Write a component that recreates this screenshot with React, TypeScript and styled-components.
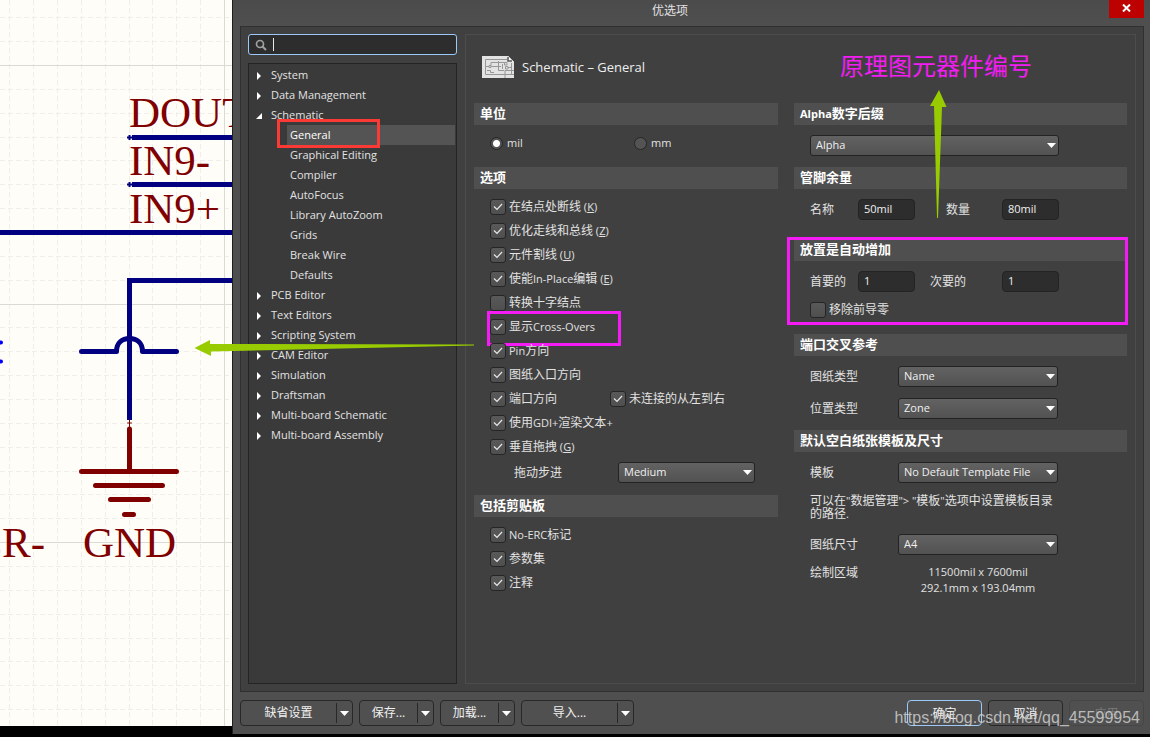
import React from 'react';
import styled, { createGlobalStyle, css } from 'styled-components';

const GlobalStyle = createGlobalStyle`
  * { box-sizing: border-box; }
  body {
    margin: 0;
    background: #000;
    font-family: "Open Sans", "Noto Sans CJK SC", sans-serif;
    font-size: 11px;
    color: #e2e2e2;
  }
  button, input, select { font: inherit; color: inherit; margin: 0; }
`;

const Page = styled.div`
  position: relative;
  display: flex;
  min-height: 100vh;
  background: #000;
`;

/* ---------- schematic sheet ---------- */

const Sheet = styled.div`
  flex: 0 0 232px;
  margin-bottom: 11px;
  background: #fffdf8;
  overflow: hidden;
`;

const Drawing = styled.svg`
  display: block;
  width: 232px;
  height: 726px;
`;

const minorX = [9, 33, 57, 81, 105, 129, 152, 176, 200];
const minorY = [17, 41, 89, 113, 137, 160, 184, 208, 256, 280, 327, 351, 375, 399, 423, 447, 471, 494, 518, 566, 590, 614, 638, 661, 685, 709];

const Schematic = () => (
  <Sheet>
    <Drawing viewBox="0 0 232 726" role="img" aria-label="Schematic sheet">
      <g stroke="#efeeea" strokeWidth="1" strokeDasharray="5 3">
        {minorX.map((x) => <line key={x} x1={x + 0.5} x2={x + 0.5} y1="0" y2="726" />)}
        {minorY.map((y) => <line key={y} x1="0" x2="232" y1={y + 0.5} y2={y + 0.5} />)}
      </g>
      <g stroke="#dadad6" strokeWidth="1">
        <path d="M224.500 0V726M0 65.500H232M0 304.500H232M0 542.500H232" />
      </g>
      <g stroke="#000080" strokeWidth="5" fill="none">
        <path d="M132 137.500H232M132 184.500H232M0 232.500H232M232 280.500H129.500V420" />
        <path d="M81.500 351.500H116.500C116.500 343 122 338.500 129.500 338.500S142.500 343 142.500 351.500H176.500" strokeLinecap="round" strokeLinejoin="round" />
        <path d="M127 137.500H132M129.500 135V140M127 184.500H132M129.500 182V187" strokeWidth="2" />
      </g>
      <g stroke="#0000ff" strokeWidth="4" strokeLinecap="round">
        <path d="M0 342.500H1M0 361.500H1" />
      </g>
      <g stroke="#800000" strokeWidth="5" strokeLinecap="round">
        <path d="M129.500 429V471M81.500 471.500H176.500M95.500 485.500H162.500M110.500 499.500H148.500M124.500 514.500H133.500" />
        <path d="M129.500 420V427M127.500 423H131.500" strokeWidth="1" />
      </g>
      <g fill="#800000" fontFamily='"Liberation Serif", serif' fontSize="43">
        <text x="129" y="127">DOUT</text>
        <text x="129" y="175">IN9-</text>
        <text x="129" y="223">IN9+</text>
        <text x="83" y="557">GND</text>
        <text x="45" y="557" textAnchor="end">ER-</text>
      </g>
    </Drawing>
  </Sheet>
);

/* ---------- dialog frame ---------- */

const Dialog = styled.main`
  flex: 1;
  display: flex;
  flex-direction: column;
  margin-bottom: 3px;
  padding: 0 6px 8px 7px;
  border-left: 1px solid #1f1f1f;
  background: linear-gradient(#4b4b4b, #4f4f4f 26px);
`;

const TitleBar = styled.header`
  display: flex;
  justify-content: center;
  position: relative;
  height: 26px;
`;

const Title = styled.h1`
  margin: 0 44px 0 0;
  font-size: 12px;
  font-weight: 400;
  line-height: 21px;
`;

const CloseButton = styled.button`
  position: absolute;
  top: 0;
  right: 0;
  display: grid;
  place-items: center;
  width: 35px;
  height: 18px;
  padding: 0 0 3px;
  border: 0;
  background: #bd0000;
`;

const Body = styled.div`
  flex: 1;
  display: grid;
  grid-template-columns: 209px 1fr;
  gap: 8px;
  padding: 7px;
  border: 1px solid #303030;
  background: #404040;
`;

const Side = styled.nav`
  display: flex;
  flex-direction: column;
  gap: 8px;
`;

const Search = styled.label`
  display: flex;
  align-items: center;
  height: 21px;
  padding: 0 6px;
  border: 1px solid #9cc9f7;
  border-radius: 3px;
  background: #2d2d2d;
`;

const Caret = styled.span`
  width: 1px;
  height: 13px;
  margin-left: 6px;
  background: #e8e8e8;
`;

const SearchInput = styled.input`
  flex: 1;
  min-width: 0;
  padding: 0;
  border: 0;
  outline: 0;
  background: transparent;
`;

const Tree = styled.ul`
  flex: 1;
  margin: 0;
  padding: 1px;
  list-style: none;
  border: 1px solid #242424;
  background: #3a3a3a;
`;

const Node = styled.li<{ $child?: boolean }>`
  position: relative;
  padding-left: ${(p) => (p.$child ? 37 : 6)}px;
`;

const NodeButton = styled.button<{ $child?: boolean; $selected?: boolean }>`
  display: flex;
  align-items: center;
  gap: 8px;
  width: 100%;
  height: 20px;
  padding: 0 0 2px ${(p) => (p.$child ? 3 : 0)}px;
  border: 0;
  background: ${(p) => (p.$selected ? '#545454' : 'transparent')};
  color: ${(p) => (p.$selected ? '#fff' : '#e2e2e2')};
  text-align: left;
  & > svg { margin-top: 3px; }
`;

const Highlight = styled.span<{ $color: string; $inset: string }>`
  position: absolute;
  inset: ${(p) => p.$inset};
  border: 3px solid ${(p) => p.$color};
  pointer-events: none;
`;

/* ---------- settings panel ---------- */

const Panel = styled.section`
  padding: 0 8px;
  border: 1px solid #4c4c4c;
`;

const PanelHead = styled.div`
  display: grid;
  grid-template-columns: 304px 1fr;
  gap: 16px;
  align-items: center;
  height: 68px;
`;

const PanelTitle = styled.h2`
  display: flex;
  align-items: center;
  gap: 8px;
  margin: 0;
  padding: 0 0 4px 8px;
  font-size: 13px;
  font-weight: 400;
  color: #eee;
`;

const Remark = styled.p`
  margin: 0;
  padding: 0 0 8px 46px;
  font-family: "Noto Sans CJK SC", sans-serif;
  font-size: 24px;
  line-height: 32px;
  color: #f41bf4;
`;

const Columns = styled.div`
  display: grid;
  grid-template-columns: 304px 1fr;
  gap: 16px;
`;

const Section = styled.section<{ $after?: number }>`
  position: relative;
  padding-bottom: ${(p) => p.$after ?? 12}px;
`;

const SectionTitle = styled.h3<{ $space: number }>`
  height: 22px;
  margin: 0 0 ${(p) => p.$space}px;
  padding-left: 6px;
  font-size: 13px;
  font-weight: 700;
  line-height: 20px;
  color: #fff;
  background: #4f4f4f;
`;

const Latin = styled.span`
  font-size: 11px;
`;

const Row = styled.div<{ $cols?: string }>`
  position: relative;
  display: grid;
  grid-template-columns: ${(p) => p.$cols ?? '1fr'};
  align-items: center;
  height: 24px;
  padding-left: 16px;
`;

const FieldRow = styled(Row)`
  height: 32px;
  padding-bottom: 1px;
`;

const StepRow = styled(Row)`
  height: 28px;
  padding-bottom: 1px;
`;

const Option = styled.label<{ $gap?: number }>`
  display: flex;
  align-items: center;
  gap: ${(p) => p.$gap ?? 3}px;
  font-size: 12px;
  line-height: 16px;
  white-space: nowrap;
`;

const Stack = styled.span`
  display: grid;
  place-items: center;
  & > * { grid-area: 1 / 1; }
  & > svg { z-index: 1; pointer-events: none; }
`;

const Box = styled.input`
  appearance: none;
  width: 16px;
  height: 16px;
  border: 1px solid #252525;
  border-radius: 3px;
  background: linear-gradient(#595959, #4f4f4f);
`;

const Dot = styled.input`
  appearance: none;
  width: 13px;
  height: 13px;
  border: 1px solid #262626;
  border-radius: 50%;
  background: #545454;
  &:checked { background: radial-gradient(circle, #fff 3px, #545454 4px); }
`;

const FieldLabel = styled.label<{ $indent?: number }>`
  padding-left: ${(p) => p.$indent ?? 0}px;
  font-size: 12px;
  line-height: 17px;
`;

const Field = styled.input`
  width: 57px;
  height: 21px;
  padding: 0 5px 2px;
  border: 1px solid #232323;
  border-radius: 4px;
  background: #2d2d2d;
  color: #f0f0f0;
`;

const SelectWrap = styled(Stack)<{ $width: number }>`
  width: ${(p) => p.$width}px;
  & > svg { justify-self: end; margin-right: 3px; }
`;

const SelectBox = styled.select`
  appearance: none;
  width: 100%;
  height: 21px;
  padding: 0 5px 2px;
  border: 1px solid #232323;
  border-radius: 3px;
  background: linear-gradient(#626262, #525252);
  color: #f0f0f0;
`;

const Note = styled.p`
  margin: 0;
  padding: 5px 72px 9px 16px;
  font-size: 12px;
  line-height: 13px;
`;

const AreaRow = styled(Row)`
  align-items: start;
  height: auto;
  padding-top: 3px;
`;

const Area = styled.output`
  text-align: center;
  line-height: 16px;
`;

/* ---------- footer ---------- */

const Footer = styled.footer`
  display: flex;
  gap: 6px;
  padding-top: 8px;
`;

const Spacer = styled.span`
  flex: 1;
`;

const buttonFace = css`
  height: 26px;
  border: 1px solid #282828;
  border-radius: 4px;
  background: #505050;
`;

const SplitButton = styled.div<{ $width: number }>`
  display: flex;
  align-items: center;
  width: ${(p) => p.$width}px;
  ${buttonFace}
`;

const SplitMain = styled.button`
  flex: 1;
  height: 20px;
  padding: 0;
  border: 0;
  border-right: 1px solid #282828;
  background: transparent;
  color: #f0f0f0;
  font-size: 12px;
  line-height: 16px;
`;

const SplitDrop = styled.button`
  display: grid;
  place-items: center;
  width: 15px;
  height: 20px;
  padding: 0;
  border: 0;
  background: transparent;
`;

const PushButton = styled.button<{ $primary?: boolean }>`
  ${buttonFace}
  width: 75px;
  padding: 0;
  font-size: 12px;
  color: #f0f0f0;
  ${(p) => p.$primary && css`border-color: #9cc9f7;`}
  &:disabled {
    color: #777;
    border-color: #464646;
  }
`;

/* ---------- page-level annotations ---------- */

const Arrows = styled.svg`
  position: absolute;
  top: 0;
  left: 0;
  width: 1150px;
  height: 380px;
  pointer-events: none;
`;

const Watermark = styled.span`
  position: absolute;
  right: 10px;
  bottom: 9px;
  font-family: "Liberation Sans", sans-serif;
  font-size: 16px;
  line-height: 20px;
  color: rgba(215, 215, 215, 0.8);
  pointer-events: none;
`;

/* ---------- small pieces ---------- */

/* Latin runs are set one size below the Chinese text around them. */
const Mixed = ({ text }: { text: string }) => (
  <span>
    {text.split(/([ -~]+)/).map((run, i) => (i % 2 ? <Latin key={i}>{run}</Latin> : run))}
  </span>
);

const DownArrow = () => (
  <svg width="9" height="5" viewBox="0 0 9 5" aria-hidden="true">
    <path d="M0 0H9L4.500 5Z" fill="#fff" />
  </svg>
);

const Check = ({ text, hotkey, checked = true }: { text: string; hotkey?: string; checked?: boolean }) => (
  <Option>
    <Stack>
      <Box type="checkbox" defaultChecked={checked} />
      {checked && (
        <svg width="10" height="8" viewBox="0 0 10 8" aria-hidden="true">
          <path d="M1 3.500L4 6.500L9 1" fill="none" stroke="#e8e8e8" strokeWidth="1.200" />
        </svg>
      )}
    </Stack>
    <span>
      <Mixed text={text} />
      {hotkey && <Latin> (<u>{hotkey}</u>)</Latin>}
    </span>
  </Option>
);

const Select = ({ id, label, value, width = 160 }: { id: string; label?: string; value: string; width?: number }) => (
  <SelectWrap $width={width}>
    <SelectBox id={id} aria-label={label} defaultValue={value}>
      <option>{value}</option>
    </SelectBox>
    <DownArrow />
  </SelectWrap>
);

const Split = ({ text, width }: { text: string; width: number }) => (
  <SplitButton $width={width}>
    <SplitMain type="button">{text}</SplitMain>
    <SplitDrop type="button" aria-label={`${text} 菜单`}><DownArrow /></SplitDrop>
  </SplitButton>
);

type TreeEntry = { name: string; children?: string[] };

const tree: TreeEntry[] = [
  { name: 'System' },
  { name: 'Data Management' },
  {
    name: 'Schematic',
    children: ['General', 'Graphical Editing', 'Compiler', 'AutoFocus', 'Library AutoZoom', 'Grids', 'Break Wire', 'Defaults'],
  },
  { name: 'PCB Editor' },
  { name: 'Text Editors' },
  { name: 'Scripting System' },
  { name: 'CAM Editor' },
  { name: 'Simulation' },
  { name: 'Draftsman' },
  { name: 'Multi-board Schematic' },
  { name: 'Multi-board Assembly' },
];

const TreeArrow = ({ open }: { open?: boolean }) => (
  <svg width="7" height="8" viewBox="0 0 7 8" aria-hidden="true">
    <path d={open ? 'M6 1V7H0Z' : 'M1 0L5 4L1 8Z'} fill="#fff" />
  </svg>
);

const SchematicIcon = () => (
  <svg width="32" height="22" viewBox="0 0 32 22" aria-hidden="true">
    <path d="M0 0H26L32 6V22H0Z" fill="#e3e3e3" />
    <path d="M26 0V6H32Z" fill="#fafafa" />
    <path d="M26 1V5H30" fill="none" stroke="#555" strokeWidth="1.500" />
    <g fill="none" stroke="#979797">
      <path d="M25 3.500H3.500V18.500H29.500V7M3.500 10.500H7M9 9.500V6.500H22M9.500 10.500H19M16.500 5V14.500H22M5 14.500H8.500V16.500H12M20 6.500H25M20.500 8V13M24 11.500H29M23 14.500H32M23 14.500V22M23 18.500H32" />
      <path d="M7 9.500H9V11.500H7ZM22.500 6.500H25V9H22.500ZM23.500 10.500H26V13H23.500Z" fill="#e3e3e3" />
    </g>
  </svg>
);

export default function App() {
  return (
    <Page>
      <GlobalStyle />
      <Schematic />
      <Dialog>
        <TitleBar>
          <Title>优选项</Title>
          <CloseButton type="button" aria-label="关闭">
            <svg width="9" height="8" viewBox="0 0 9 8" aria-hidden="true">
              <path d="M1 0.500L8 7.500M8 0.500L1 7.500" stroke="#fff" strokeWidth="2" />
            </svg>
          </CloseButton>
        </TitleBar>

        <Body>
          <Side>
            <Search>
              <svg width="12" height="12" viewBox="0 0 12 12" aria-hidden="true">
                <circle cx="5" cy="5" r="3.500" fill="none" stroke="#a0a0a0" strokeWidth="1.700" />
                <path d="M7.500 7.500L11 11" stroke="#a0a0a0" strokeWidth="2" />
              </svg>
              <Caret />
              <SearchInput type="text" aria-label="搜索" />
            </Search>
            <Tree>
              {tree.map((entry) => (
                <React.Fragment key={entry.name}>
                  <Node>
                    <NodeButton type="button">
                      <TreeArrow open={Boolean(entry.children)} />
                      {entry.name}
                    </NodeButton>
                  </Node>
                  {entry.children?.map((child) => (
                    <Node key={child} $child>
                      <NodeButton type="button" $child $selected={child === 'General'}>{child}</NodeButton>
                      {child === 'General' && <Highlight $color="#fb3a36" $inset="-6px 75px -3px 27px" />}
                    </Node>
                  ))}
                </React.Fragment>
              ))}
            </Tree>
          </Side>

          <Panel>
            <PanelHead>
              <PanelTitle><SchematicIcon />Schematic – General</PanelTitle>
              <Remark>原理图元器件编号</Remark>
            </PanelHead>
            <Columns>
              <div>
                <Section>
                  <SectionTitle $space={6}>单位</SectionTitle>
                  <Row $cols="144px auto">
                    <Option $gap={4}><Dot type="radio" name="unit" defaultChecked /><Latin>mil</Latin></Option>
                    <Option $gap={4}><Dot type="radio" name="unit" /><Latin>mm</Latin></Option>
                  </Row>
                </Section>
                <Section $after={8}>
                  <SectionTitle $space={6}>选项</SectionTitle>
                  <Row><Check text="在结点处断线" hotkey="K" /></Row>
                  <Row><Check text="优化走线和总线" hotkey="Z" /></Row>
                  <Row><Check text="元件割线" hotkey="U" /></Row>
                  <Row><Check text="使能In-Place编辑" hotkey="E" /></Row>
                  <Row><Check text="转换十字结点" checked={false} /></Row>
                  <Row>
                    <Check text="显示Cross-Overs" />
                    <Highlight $color="#f41bf4" $inset="-4px 157px -7px 13px" />
                  </Row>
                  <Row><Check text="Pin方向" /></Row>
                  <Row><Check text="图纸入口方向" /></Row>
                  <Row $cols="120px auto">
                    <Check text="端口方向" />
                    <Check text="未连接的从左到右" />
                  </Row>
                  <Row><Check text="使用GDI+渲染文本+" /></Row>
                  <Row><Check text="垂直拖拽" hotkey="G" /></Row>
                  <StepRow $cols="128px auto">
                    <FieldLabel htmlFor="drag-step" $indent={24}>拖动步进</FieldLabel>
                    <Select id="drag-step" value="Medium" width={137} />
                  </StepRow>
                </Section>
                <Section>
                  <SectionTitle $space={6}>包括剪贴板</SectionTitle>
                  <Row><Check text="No-ERC标记" /></Row>
                  <Row><Check text="参数集" /></Row>
                  <Row><Check text="注释" /></Row>
                </Section>
              </div>

              <div>
                <Section $after={5}>
                  <SectionTitle $space={5}><Mixed text="Alpha数字后缀" /></SectionTitle>
                  <FieldRow><Select id="suffix" label="Alpha数字后缀" value="Alpha" width={249} /></FieldRow>
                </Section>
                <Section $after={13}>
                  <SectionTitle $space={5}>管脚余量</SectionTitle>
                  <FieldRow $cols="48px 57px 87px 57px">
                    <FieldLabel htmlFor="pin-name">名称</FieldLabel>
                    <Field id="pin-name" defaultValue="50mil" />
                    <FieldLabel htmlFor="pin-number" $indent={31}>数量</FieldLabel>
                    <Field id="pin-number" defaultValue="80mil" />
                  </FieldRow>
                </Section>
                <Section $after={12}>
                  <SectionTitle $space={5}>放置是自动增加</SectionTitle>
                  <FieldRow $cols="48px 57px 87px 57px">
                    <FieldLabel htmlFor="primary">首要的</FieldLabel>
                    <Field id="primary" defaultValue="1" />
                    <FieldLabel htmlFor="secondary" $indent={15}>次要的</FieldLabel>
                    <Field id="secondary" defaultValue="1" />
                  </FieldRow>
                  <Row><Check text="移除前导零" checked={false} /></Row>
                  <Highlight $color="#f41bf4" $inset="-2px -1px 9px -7px" />
                </Section>
                <Section $after={5}>
                  <SectionTitle $space={5}>端口交叉参考</SectionTitle>
                  <FieldRow $cols="88px auto">
                    <FieldLabel htmlFor="sheet-style">图纸类型</FieldLabel>
                    <Select id="sheet-style" value="Name" />
                  </FieldRow>
                  <FieldRow $cols="88px auto">
                    <FieldLabel htmlFor="location-style">位置类型</FieldLabel>
                    <Select id="location-style" value="Zone" />
                  </FieldRow>
                </Section>
                <Section>
                  <SectionTitle $space={5}>默认空白纸张模板及尺寸</SectionTitle>
                  <FieldRow $cols="88px auto">
                    <FieldLabel htmlFor="template">模板</FieldLabel>
                    <Select id="template" value="No Default Template File" />
                  </FieldRow>
                  <Note><Mixed text={'可以在"数据管理"> "模板"选项中设置模板目录的路径.'} /></Note>
                  <FieldRow $cols="88px auto">
                    <FieldLabel htmlFor="sheet-size">图纸尺寸</FieldLabel>
                    <Select id="sheet-size" value="A4" />
                  </FieldRow>
                  <AreaRow $cols="88px 160px">
                    <FieldLabel as="span">绘制区域</FieldLabel>
                    <Area>11500mil x 7600mil<br />292.1mm x 193.04mm</Area>
                  </AreaRow>
                </Section>
              </div>
            </Columns>
          </Panel>
        </Body>

        <Footer>
          <Split text="缺省设置" width={113} />
          <Split text="保存..." width={75} />
          <Split text="加载..." width={75} />
          <Split text="导入..." width={113} />
          <Spacer />
          <PushButton type="button" $primary>确定</PushButton>
          <PushButton type="button">取消</PushButton>
          <PushButton type="button" disabled>应用</PushButton>
        </Footer>
      </Dialog>

      <Arrows viewBox="0 0 1150 380" aria-hidden="true">
        <g fill="#99cc00">
          <path d="M194.500 348L210 340V344L474 344.500V345.500L211 351.500V356Z" />
          <path d="M939 90L946.500 107H942L938 218H937L934 106H930Z" />
        </g>
      </Arrows>
      <Watermark>https://blog.csdn.net/qq_45599954</Watermark>
    </Page>
  );
}
